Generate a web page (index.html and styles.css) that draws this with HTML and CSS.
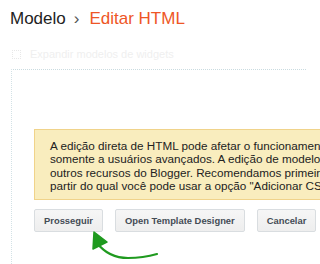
FILE: index.html
```html
<!DOCTYPE html>
<html lang="pt">
<head>
<meta charset="utf-8">
<link rel="stylesheet" href="styles.css">
</head>
<body>
<div class="page">
  <h1 class="crumbs"><span class="crumb">Modelo</span><span class="sep">›</span><span class="current">Editar HTML</span></h1>
  <label class="expand"><span class="box"></span><span>Expandir modelos de widgets</span></label>
  <div class="editor">
    <div class="warning">
      <p>A edição direta de HTML pode afetar o funcionamento do seu blog e é recomendada<br>
      somente a usuários avançados. A edição de modelos também pode desativar alguns<br>
      outros recursos do Blogger. Recomendamos primeiro fazer o download do modelo, a<br>
      partir do qual você pode usar a opção "Adicionar CSS" para mudanças simples.</p>
    </div>
    <div class="actions">
      <button class="btn">Prosseguir</button>
      <button class="btn">Open Template Designer</button>
      <button class="btn">Cancelar</button>
    </div>
  </div>
  <svg class="arrow" width="80" height="34" viewBox="0 0 80 34">
    <polygon points="4,2 3,19 17,12" fill="#1f9a1f" stroke="#1f9a1f" stroke-width="1.5" stroke-linejoin="round"/>
    <path d="M7 13 C14 22 24 28 38 28 C50 28 60 26 67 24" fill="none" stroke="#1f9a1f" stroke-width="2.2" stroke-linecap="round"/>
  </svg>
</div>
</body>
</html>
```
FILE: styles.css
```css
html, body {
  margin: 0;
  padding: 0;
  background: #ffffff;
  overflow: hidden;
  width: 320px;
  height: 264px;
}
.page {
  position: relative;
  width: 320px;
  height: 264px;
  overflow: hidden;
  padding: 9px 0 0 10px;
  box-sizing: border-box;
  font-family: "Liberation Sans", Arial, sans-serif;
}
.crumbs {
  margin: 0;
  font-size: 17px;
  line-height: 20px;
  font-weight: normal;
  white-space: nowrap;
}
.crumb { color: #222222; }
.sep { color: #555555; margin: 0 10px 0 8px; }
.current { color: #ee5626; }
.expand {
  display: flex;
  align-items: center;
  gap: 9px;
  margin: 18px 0 0 2px;
  height: 14px;
  font-size: 11px;
  color: #efefef;
}
.expand .box {
  width: 7px;
  height: 7px;
  border: 1px dotted #e8e8e8;
}
.editor {
  margin: 8px 0 0 1px;
  width: 294px;
  height: 194px;
  border-top: 1px dotted #c9dbe0;
  border-left: 1px dotted #d3e2e6;
}
.warning {
  margin: 59px 0 0 22px;
  width: 440px;
  background: #f9edbe;
  border: 1px solid #f0d38a;
  padding: 9px 0 7px 15px;
}
.warning p {
  margin: 0;
  font-size: 11.7px;
  line-height: 13.3px;
  color: #222222;
  white-space: nowrap;
}
.actions {
  display: flex;
  gap: 12px;
  margin: 9px 0 0 22px;
}
.btn {
  height: 23px;
  padding: 0 9px;
  border: 1px solid #d9dde0;
  border-radius: 2px;
  background: linear-gradient(#f6f6f6, #eeeeee);
  font-family: "Liberation Sans", Arial, sans-serif;
  font-size: 9.4px;
  font-weight: bold;
  color: #444c55;
  white-space: nowrap;
}
.arrow {
  position: absolute;
  left: 90px;
  top: 230px;
}
```
